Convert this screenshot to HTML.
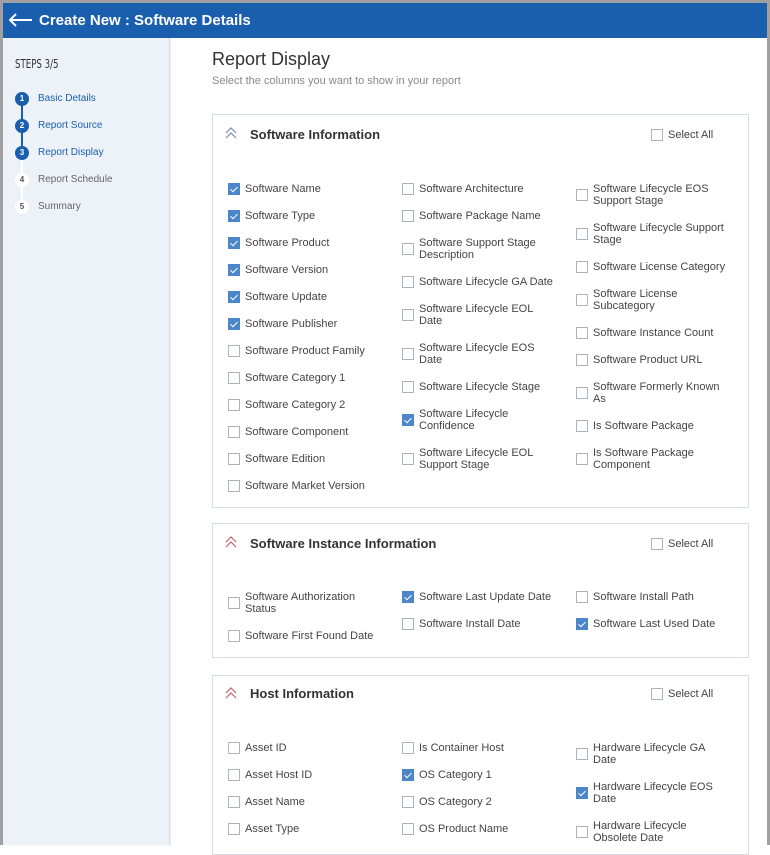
<!DOCTYPE html>
<html><head><meta charset="utf-8"><style>
*{box-sizing:border-box;margin:0;padding:0}
body{width:770px;height:845px;overflow:hidden;font-family:"Liberation Sans",Arial,sans-serif;background:#fff;position:relative}
.frame{position:absolute;left:0;top:0;width:770px;height:845px;border:3px solid #a0a0a0;border-bottom:none}
.hdr{position:absolute;left:3px;top:3px;width:764px;height:35px;background:#1a5fae;color:#fff;font-size:15px;font-weight:bold}
.hdr .t{position:absolute;left:36px;top:9px}
.side{position:absolute;left:3px;top:38px;width:167px;height:807px;background:#edf2f9;border-right:1px solid #d5dde6;box-shadow:1px 0 2px rgba(0,0,0,.08)}
.steps{position:absolute;left:15px;top:57px;font-size:12px;color:#333;transform:scaleX(.8);transform-origin:left;font-family:"DejaVu Sans Condensed","Liberation Sans",sans-serif}
.st{position:absolute;left:15px;width:14px;height:14px;border-radius:50%;font-size:8px;text-align:center;line-height:14px;font-weight:bold}
.st.on{background:#1a5fae;color:#fff}.st.off{background:#fff;color:#555}
.sl{position:absolute;left:38px;font-size:10px}
.line{position:absolute;left:21px;width:2px}
.title{position:absolute;left:212px;top:49px;font-size:18px;color:#333}
.sub{position:absolute;left:212px;top:75px;font-size:11px;color:#888}
.box{position:absolute;left:212px;width:537px;border:1px solid #d9dee4;background:#fff}
.sh{position:absolute;left:250px;font-size:13px;font-weight:bold;color:#333}
.chev{position:absolute;left:225px}
.i{position:absolute;font-size:11px;color:#444;line-height:12px;display:flex;align-items:center}
.i span{width:120px;display:block;margin-left:5px}
.c{width:12px;height:12px;border:1px solid #aab4be;background:#fff;flex:none;position:relative}
.c.k{background:#4a86c8;border-color:#4a86c8}
.c.k:after{content:"";position:absolute;left:3px;top:1px;width:3px;height:6px;border:solid #fff;border-width:0 1.5px 1.5px 0;transform:rotate(45deg)}
</style></head><body>
<div class="hdr"><svg style="position:absolute;left:6px;top:10px" width="24" height="14"><path d="M1 7H23M7 1L1 7L7 13" stroke="#fff" stroke-width="2" fill="none"/></svg><div class="t">Create New : Software Details</div></div>
<div class="side"></div>
<div class="steps">STEPS 3/5</div>
<div class="line" style="top:99px;height:54px;background:#1a5fae"></div>
<div class="line" style="top:153px;height:54px;background:#fff"></div>
<div class="st on" style="top:92px">1</div><div class="sl" style="top:93px;color:#1a5fae">Basic Details</div>
<div class="st on" style="top:119px">2</div><div class="sl" style="top:120px;color:#1a5fae">Report Source</div>
<div class="st on" style="top:146px">3</div><div class="sl" style="top:147px;color:#1a5fae">Report Display</div>
<div class="st off" style="top:173px">4</div><div class="sl" style="top:174px;color:#666">Report Schedule</div>
<div class="st off" style="top:200px">5</div><div class="sl" style="top:201px;color:#666">Summary</div>
<div class="title">Report Display</div>
<div class="sub">Select the columns you want to show in your report</div>

<div class="box" style="top:114px;height:394px"></div>
<svg class="chev" style="top:127px" width="12" height="12"><path d="M1 6L6 1L11 6M1 11L6 6L11 11" stroke="#7a8db0" stroke-width="1.2" fill="none"/></svg><div class="sh" style="top:127px">Software Information</div>
<div class="i" style="left:651px;top:129px"><div class="c"></div><span>Select All</span></div>

<div class="i" style="left:228px;top:183px"><div class="c k"></div><span>Software Name</span></div>
<div class="i" style="left:228px;top:210px"><div class="c k"></div><span>Software Type</span></div>
<div class="i" style="left:228px;top:237px"><div class="c k"></div><span>Software Product</span></div>
<div class="i" style="left:228px;top:264px"><div class="c k"></div><span>Software Version</span></div>
<div class="i" style="left:228px;top:291px"><div class="c k"></div><span>Software Update</span></div>
<div class="i" style="left:228px;top:318px"><div class="c k"></div><span>Software Publisher</span></div>
<div class="i" style="left:228px;top:345px"><div class="c"></div><span style="width:140px">Software Product Family</span></div>
<div class="i" style="left:228px;top:372px"><div class="c"></div><span>Software Category 1</span></div>
<div class="i" style="left:228px;top:399px"><div class="c"></div><span>Software Category 2</span></div>
<div class="i" style="left:228px;top:426px"><div class="c"></div><span>Software Component</span></div>
<div class="i" style="left:228px;top:453px"><div class="c"></div><span>Software Edition</span></div>
<div class="i" style="left:228px;top:480px"><div class="c"></div><span style="width:140px">Software Market Version</span></div>

<div class="i" style="left:402px;top:183px"><div class="c"></div><span style="width:140px">Software Architecture</span></div>
<div class="i" style="left:402px;top:210px"><div class="c"></div><span style="width:140px">Software Package Name</span></div>
<div class="i" style="left:402px;top:237px"><div class="c"></div><span style="width:135px">Software Support Stage Description</span></div>
<div class="i" style="left:402px;top:276px"><div class="c"></div><span style="width:145px">Software Lifecycle GA Date</span></div>
<div class="i" style="left:402px;top:303px"><div class="c"></div><span>Software Lifecycle EOL Date</span></div>
<div class="i" style="left:402px;top:342px"><div class="c"></div><span>Software Lifecycle EOS Date</span></div>
<div class="i" style="left:402px;top:381px"><div class="c"></div><span style="width:140px">Software Lifecycle Stage</span></div>
<div class="i" style="left:402px;top:408px"><div class="c k"></div><span>Software Lifecycle Confidence</span></div>
<div class="i" style="left:402px;top:447px"><div class="c"></div><span>Software Lifecycle EOL Support Stage</span></div>

<div class="i" style="left:576px;top:183px"><div class="c"></div><span>Software Lifecycle EOS Support Stage</span></div>
<div class="i" style="left:576px;top:222px"><div class="c"></div><span style="width:140px">Software Lifecycle Support Stage</span></div>
<div class="i" style="left:576px;top:261px"><div class="c"></div><span style="width:150px">Software License Category</span></div>
<div class="i" style="left:576px;top:288px"><div class="c"></div><span>Software License Subcategory</span></div>
<div class="i" style="left:576px;top:327px"><div class="c"></div><span style="width:140px">Software Instance Count</span></div>
<div class="i" style="left:576px;top:354px"><div class="c"></div><span style="width:140px">Software Product URL</span></div>
<div class="i" style="left:576px;top:381px"><div class="c"></div><span style="width:135px">Software Formerly Known As</span></div>
<div class="i" style="left:576px;top:420px"><div class="c"></div><span>Is Software Package</span></div>
<div class="i" style="left:576px;top:447px"><div class="c"></div><span>Is Software Package Component</span></div>

<div class="box" style="top:523px;height:135px"></div>
<svg class="chev" style="top:536px" width="12" height="12"><path d="M1 6L6 1L11 6M1 11L6 6L11 11" stroke="#c06070" stroke-width="1.2" fill="none"/></svg><div class="sh" style="top:536px">Software Instance Information</div>
<div class="i" style="left:651px;top:538px"><div class="c"></div><span>Select All</span></div>
<div class="i" style="left:228px;top:591px"><div class="c"></div><span style="width:135px">Software Authorization Status</span></div>
<div class="i" style="left:228px;top:630px"><div class="c"></div><span style="width:145px">Software First Found Date</span></div>
<div class="i" style="left:402px;top:591px"><div class="c k"></div><span style="width:150px">Software Last Update Date</span></div>
<div class="i" style="left:402px;top:618px"><div class="c"></div><span style="width:140px">Software Install Date</span></div>
<div class="i" style="left:576px;top:591px"><div class="c"></div><span style="width:140px">Software Install Path</span></div>
<div class="i" style="left:576px;top:618px"><div class="c k"></div><span style="width:150px">Software Last Used Date</span></div>

<div class="box" style="top:675px;height:180px"></div>
<svg class="chev" style="top:687px" width="12" height="12"><path d="M1 6L6 1L11 6M1 11L6 6L11 11" stroke="#c06070" stroke-width="1.2" fill="none"/></svg><div class="sh" style="top:686px">Host Information</div>
<div class="i" style="left:651px;top:688px"><div class="c"></div><span>Select All</span></div>
<div class="i" style="left:228px;top:742px"><div class="c"></div><span>Asset ID</span></div>
<div class="i" style="left:228px;top:769px"><div class="c"></div><span>Asset Host ID</span></div>
<div class="i" style="left:228px;top:796px"><div class="c"></div><span>Asset Name</span></div>
<div class="i" style="left:228px;top:823px"><div class="c"></div><span>Asset Type</span></div>
<div class="i" style="left:402px;top:742px"><div class="c"></div><span>Is Container Host</span></div>
<div class="i" style="left:402px;top:769px"><div class="c k"></div><span>OS Category 1</span></div>
<div class="i" style="left:402px;top:796px"><div class="c"></div><span>OS Category 2</span></div>
<div class="i" style="left:402px;top:823px"><div class="c"></div><span>OS Product Name</span></div>
<div class="i" style="left:576px;top:742px"><div class="c"></div><span>Hardware Lifecycle GA Date</span></div>
<div class="i" style="left:576px;top:781px"><div class="c k"></div><span>Hardware Lifecycle EOS Date</span></div>
<div class="i" style="left:576px;top:820px"><div class="c"></div><span>Hardware Lifecycle Obsolete Date</span></div>
<div class="frame"></div>
</body></html>
